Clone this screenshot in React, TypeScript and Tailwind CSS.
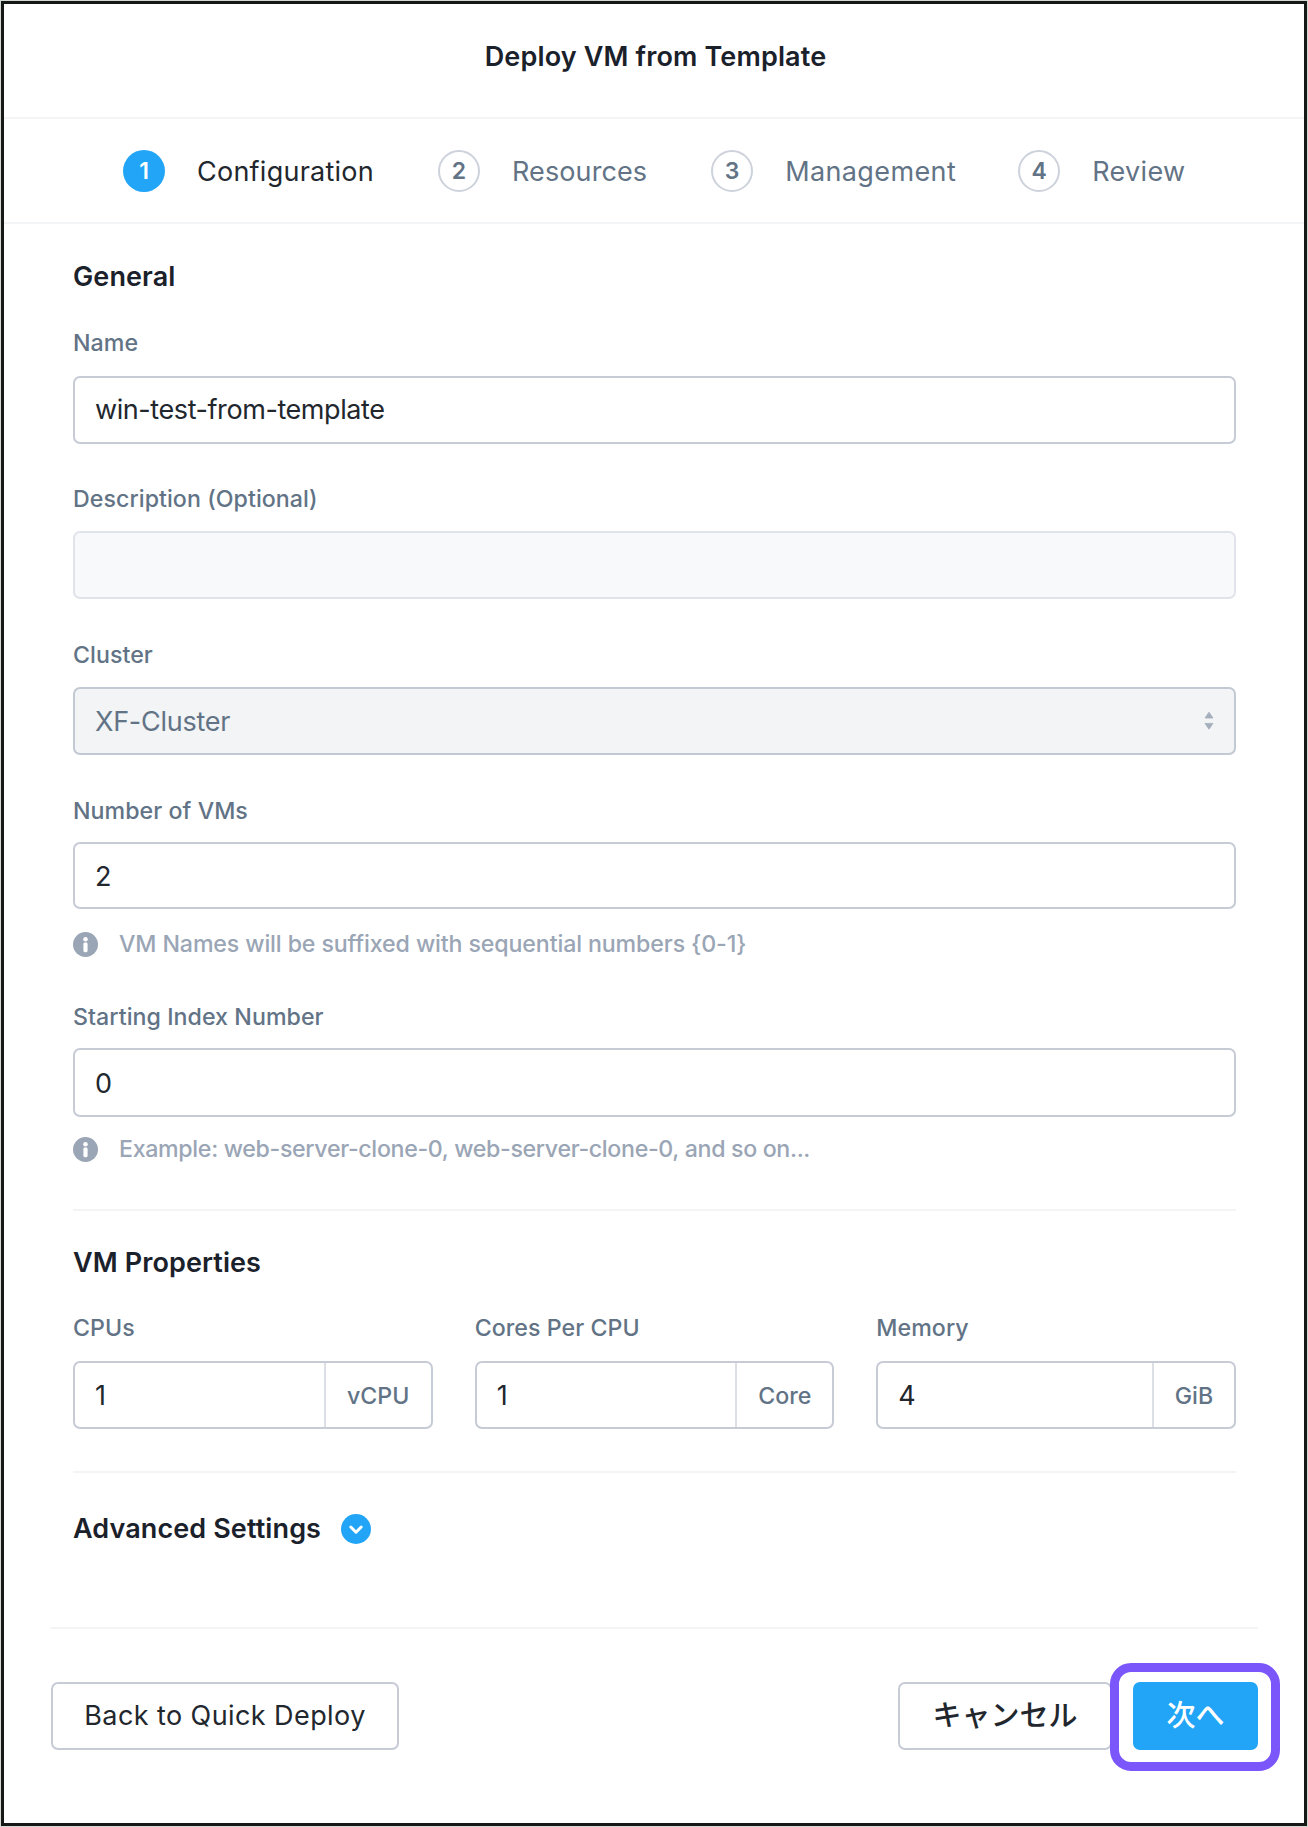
import type { ReactNode } from 'react'

const steps = [
  { id: 1, label: 'Configuration', labelClass: 'tracking-[0.25px]', gap: 'mr-[64px]' },
  { id: 2, label: 'Resources', labelClass: 'tracking-[0.1px]', gap: 'mr-[64px]' },
  { id: 3, label: 'Management', labelClass: 'tracking-[0.38px]', gap: 'mr-[62px]' },
  { id: 4, label: 'Review', labelClass: 'tracking-[0.35px]', gap: '' }
]

const vmProperties = [
  { label: 'CPUs', value: '1', unit: 'vCPU', unitWidth: 'w-[107px]' },
  { label: 'Cores Per CPU', value: '1', unit: 'Core', unitWidth: 'w-[97px]' },
  { label: 'Memory', value: '4', unit: 'GiB', unitWidth: 'w-[82px]' }
]

function Label({ children }: { children: ReactNode }) {
  return (
    <div className="h-7 leading-7 text-[23.2px] font-medium text-[#627386] tracking-[0.05px] whitespace-nowrap">
      {children}
    </div>
  )
}

function SectionTitle({ children }: { children: ReactNode }) {
  return (
    <h2 className="h-8 leading-8 text-[27px] font-semibold text-[#1b212a] tracking-[0.1px] whitespace-nowrap">
      {children}
    </h2>
  )
}

function Hint({ children, className }: { children: ReactNode; className: string }) {
  return (
    <div className="flex items-center h-7 text-[#9aa5b5]">
      <svg className="w-[25px] h-[25px] mr-[21px] shrink-0" viewBox="0 0 25 25">
        <circle cx="12.5" cy="12.5" r="12.5" fill="currentColor" />
        <circle cx="12.5" cy="7.2" r="2.3" fill="#fff" />
        <rect x="10.4" y="10.6" width="4.2" height="9.6" rx="1.4" fill="#fff" />
      </svg>
      <span className={`text-[23.2px] leading-7 font-medium whitespace-nowrap ${className}`}>{children}</span>
    </div>
  )
}

export default function App() {
  return (
    <div className="w-[1308px] h-[1827px] bg-[#d3d9d3] p-px font-['Inter','Noto_Sans_CJK_JP',sans-serif]">
      <div className="flex flex-col h-full border-[3px] border-[#151817] bg-white">
        {/* Header */}
        <div className="flex justify-center h-[115px] pl-[3px] pt-[37px] border-b-2 border-[#f3f4f6]">
          <h1 className="h-8 leading-8 text-[27px] font-semibold text-[#1b212a] tracking-[0.15px]">Deploy VM from Template</h1>
        </div>

        {/* Steps */}
        <div className="flex items-center h-[105px] pl-[119px] pt-px border-b-2 border-[#f3f4f6]">
          {steps.map((step) => (
            <div key={step.id} className={`flex items-center ${step.gap}`}>
              <div
                className={`flex items-center justify-center w-[42px] h-[42px] mr-8 pt-px rounded-full text-[23px] font-semibold ${
                  step.id === 1 ? 'bg-[#22a5f7] text-white' : 'border-2 border-[#cdd2dc] text-[#627386]'
                }`}
              >
                {step.id}
              </div>
              <span
                className={`pt-px text-[27px] leading-8 ${step.labelClass} ${step.id === 1 ? 'text-[#22272e]' : 'text-[#627386]'}`}
              >
                {step.label}
              </span>
            </div>
          ))}
        </div>

        {/* Form */}
        <div className="pl-[69px] pr-[68px] pt-[37px]">
          <SectionTitle>General</SectionTitle>

          <div className="mt-[36px]">
            <Label>Name</Label>
            <div className="flex items-center h-[68px] mt-[19px] pl-[20px] pt-px rounded-[7px] border-2 border-[#c6cbd6] text-[27px] text-[#22272e] tracking-[-0.42px]">
              win-test-from-template
            </div>
          </div>

          <div className="mt-[41px]">
            <Label>Description (Optional)</Label>
            <div className="h-[68px] mt-[18px] rounded-[7px] border-2 border-[#e0e3e9] bg-[#f8f9fb]" />
          </div>

          <div className="mt-[42px]">
            <Label>Cluster</Label>
            <div className="flex items-center justify-between h-[68px] mt-[18px] pl-[20px] pr-[20px] rounded-[7px] border-2 border-[#c3c9d3] bg-[#f2f4f6] text-[27px] text-[#627386] tracking-[-0.25px]">
              <span className="pt-[3px]">XF-Cluster</span>
              <svg className="w-[10px] h-[20px]" viewBox="0 0 10 20" fill="#a5afbc">
                <path d="M5 1.2 9 7H1zM5 18.2 1 12.4h8z" stroke="#a5afbc" strokeWidth=".8" strokeLinejoin="round" />
              </svg>
            </div>
          </div>

          <div className="mt-[42px]">
            <Label>Number of VMs</Label>
            <div className="flex items-center h-[67px] mt-[17px] pl-[20px] pt-[3px] rounded-[7px] border-2 border-[#c6cbd6] text-[27px] text-[#22272e]">
              2
            </div>
            <div className="mt-[21px]">
              <Hint className="tracking-[-0.12px]">VM Names will be suffixed with sequential numbers {'{0-1}'}</Hint>
            </div>
          </div>

          <div className="mt-[45px]">
            <Label>Starting Index Number</Label>
            <div className="flex items-center h-[69px] mt-[17px] pl-[20px] pt-[3px] rounded-[7px] border-2 border-[#c6cbd6] text-[27px] text-[#22272e]">
              0
            </div>
            <div className="mt-[18px]">
              <Hint className="tracking-[-0.33px]">Example: web-server-clone-0, web-server-clone-0, and so on...</Hint>
            </div>
          </div>

          {/* VM Properties */}
          <div className="mt-[46px] pt-[36px] border-t-2 border-[#f3f4f6]">
            <SectionTitle>VM Properties</SectionTitle>
            <div className="grid grid-cols-3 gap-x-[42px] mt-[35px]">
              {vmProperties.map((prop) => (
                <div key={prop.label}>
                  <Label>{prop.label}</Label>
                  <div className="flex h-[68px] mt-[19px] rounded-[7px] border-2 border-[#c6cbd6]">
                    <div className="flex flex-1 items-center pl-[20px] pt-[3px] text-[27px] text-[#22272e]">{prop.value}</div>
                    <div
                      className={`flex items-center justify-center pt-[3px] border-l-2 border-[#dcdfe5] text-[23.2px] font-medium text-[#627386] ${prop.unitWidth}`}
                    >
                      {prop.unit}
                    </div>
                  </div>
                </div>
              ))}
            </div>
          </div>

          {/* Advanced Settings */}
          <div className="flex items-center mt-[42px] pt-[40px] border-t-2 border-[#f3f4f6]">
            <SectionTitle>Advanced Settings</SectionTitle>
            <svg className="w-[30px] h-[30px] ml-[20px]" viewBox="0 0 30 30" fill="none">
              <circle cx="15" cy="15" r="15" fill="#22a5f7" />
              <path d="m9.8 13 5.2 5.2 5.2-5.2" stroke="#fff" strokeWidth="3" strokeLinecap="round" strokeLinejoin="round" />
            </svg>
          </div>
        </div>

        {/* Footer */}
        <div className="flex items-start justify-between ml-[47px] mr-[46px] mt-auto h-[196px] pt-[53px] border-t-2 border-[#f3f4f6]">
          <button className="flex items-center justify-center w-[348px] h-[68px] pt-px rounded-[7px] border-2 border-[#c6cbd6] text-[27px] text-[#22272e] tracking-[0.42px]">
            Back to Quick Deploy
          </button>
          <div className="flex">
            <button className="flex items-center justify-center w-[214px] h-[68px] rounded-[7px] border-2 border-[#c6cbd6] text-[29px] font-medium text-[#22272e]">
              キャンセル
            </button>
            <div className="relative ml-[21px]">
              <button className="flex items-center justify-center w-[125px] h-[68px] rounded-[7px] bg-[#22a5f7] text-[29px] font-medium text-white">
                次へ
              </button>
              {/* Highlight frame around the primary action */}
              <div className="absolute -left-[23px] -right-[22px] -top-[19px] -bottom-[21px] rounded-[21px] border-9 border-[#7b57fb]" />
            </div>
          </div>
        </div>
      </div>
    </div>
  )
}
